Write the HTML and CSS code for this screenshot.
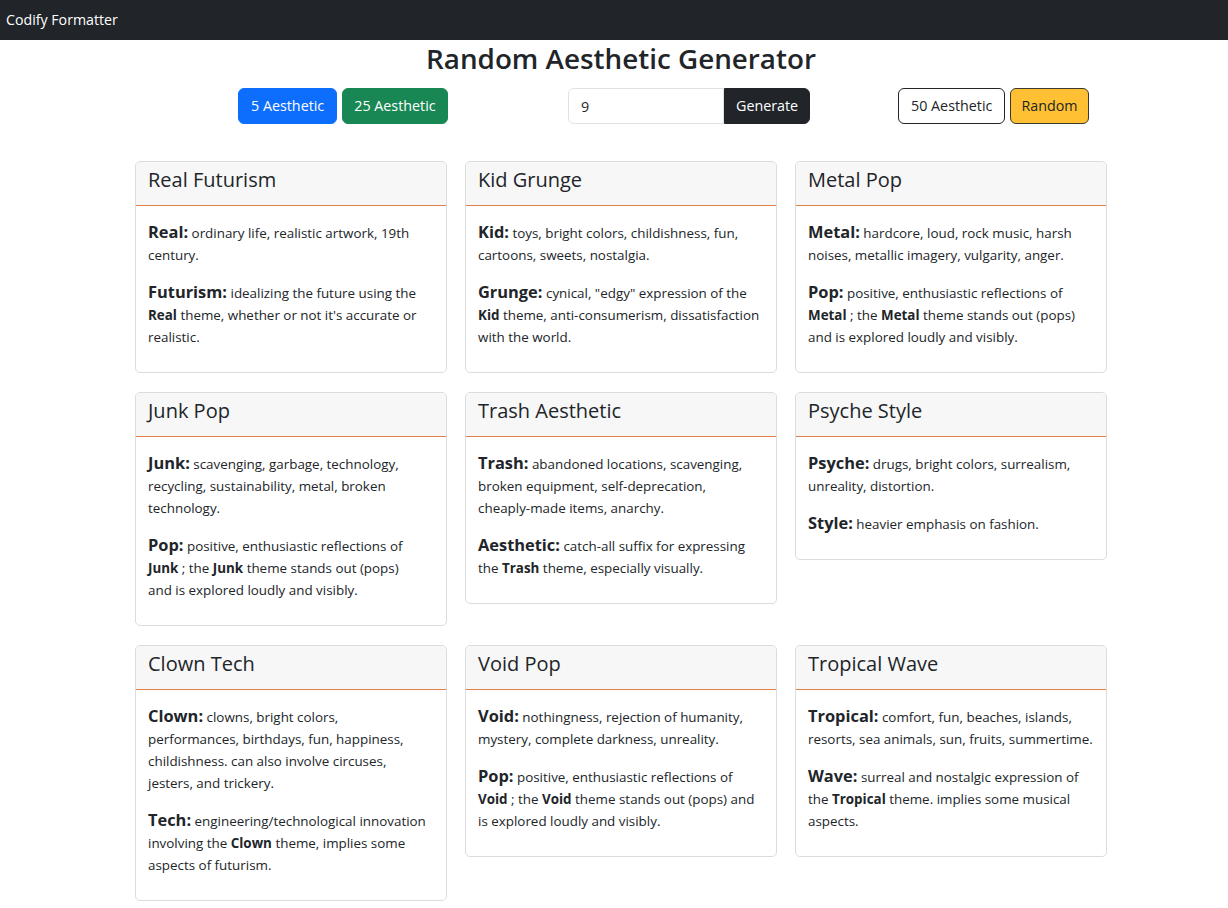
FILE: index.html
```html
<!DOCTYPE html>
<html lang="en">
<head>
<meta charset="utf-8">
<title>Random Aesthetic Generator</title>
<link rel="stylesheet" href="styles.css">
</head>
<body>
<nav class="navbar"><span class="brand">Codify Formatter</span></nav>
<main class="wrap">
  <h1 class="title">Random Aesthetic Generator</h1>
  <div class="toolbar">
    <div class="group">
      <button class="btn btn-primary">5 Aesthetic</button>
      <button class="btn btn-success">25 Aesthetic</button>
    </div>
    <div class="group input-group">
      <input class="field" type="text" value="9">
      <button class="btn btn-dark btn-attached">Generate</button>
    </div>
    <div class="group">
      <button class="btn btn-outline">50 Aesthetic</button>
      <button class="btn btn-warning">Random</button>
    </div>
  </div>
  <div class="cards">
    <div class="card">
      <div class="card-header">Real Futurism</div>
      <div class="card-body">
        <p><strong class="lbl">Real:</strong> ordinary life, realistic artwork, 19th<br>century.</p>
        <p><strong class="lbl">Futurism:</strong> idealizing the future using the<br><b>Real</b> theme, whether or not it's accurate or<br>realistic.</p>
      </div>
    </div>
    <div class="card">
      <div class="card-header">Kid Grunge</div>
      <div class="card-body">
        <p><strong class="lbl">Kid:</strong> toys, bright colors, childishness, fun,<br>cartoons, sweets, nostalgia.</p>
        <p><strong class="lbl">Grunge:</strong> cynical, "edgy" expression of the<br><b>Kid</b> theme, anti-consumerism, dissatisfaction<br>with the world.</p>
      </div>
    </div>
    <div class="card">
      <div class="card-header">Metal Pop</div>
      <div class="card-body">
        <p><strong class="lbl">Metal:</strong> hardcore, loud, rock music, harsh<br>noises, metallic imagery, vulgarity, anger.</p>
        <p><strong class="lbl">Pop:</strong> positive, enthusiastic reflections of<br><b>Metal</b> ; the <b>Metal</b> theme stands out (pops)<br>and is explored loudly and visibly.</p>
      </div>
    </div>
    <div class="card">
      <div class="card-header">Junk Pop</div>
      <div class="card-body">
        <p><strong class="lbl">Junk:</strong> scavenging, garbage, technology,<br>recycling, sustainability, metal, broken<br>technology.</p>
        <p><strong class="lbl">Pop:</strong> positive, enthusiastic reflections of<br><b>Junk</b> ; the <b>Junk</b> theme stands out (pops)<br>and is explored loudly and visibly.</p>
      </div>
    </div>
    <div class="card">
      <div class="card-header">Trash Aesthetic</div>
      <div class="card-body">
        <p><strong class="lbl">Trash:</strong> abandoned locations, scavenging,<br>broken equipment, self-deprecation,<br>cheaply-made items, anarchy.</p>
        <p><strong class="lbl">Aesthetic:</strong> catch-all suffix for expressing<br>the <b>Trash</b> theme, especially visually.</p>
      </div>
    </div>
    <div class="card">
      <div class="card-header">Psyche Style</div>
      <div class="card-body">
        <p><strong class="lbl">Psyche:</strong> drugs, bright colors, surrealism,<br>unreality, distortion.</p>
        <p><strong class="lbl">Style:</strong> heavier emphasis on fashion.</p>
      </div>
    </div>
    <div class="card">
      <div class="card-header">Clown Tech</div>
      <div class="card-body">
        <p><strong class="lbl">Clown:</strong> clowns, bright colors,<br>performances, birthdays, fun, happiness,<br>childishness. can also involve circuses,<br>jesters, and trickery.</p>
        <p><strong class="lbl">Tech:</strong> engineering/technological innovation<br>involving the <b>Clown</b> theme, implies some<br>aspects of futurism.</p>
      </div>
    </div>
    <div class="card">
      <div class="card-header">Void Pop</div>
      <div class="card-body">
        <p><strong class="lbl">Void:</strong> nothingness, rejection of humanity,<br>mystery, complete darkness, unreality.</p>
        <p><strong class="lbl">Pop:</strong> positive, enthusiastic reflections of<br><b>Void</b> ; the <b>Void</b> theme stands out (pops) and<br>is explored loudly and visibly.</p>
      </div>
    </div>
    <div class="card">
      <div class="card-header">Tropical Wave</div>
      <div class="card-body">
        <p><strong class="lbl">Tropical:</strong> comfort, fun, beaches, islands,<br>resorts, sea animals, sun, fruits, summertime.</p>
        <p><strong class="lbl">Wave:</strong> surreal and nostalgic expression of<br>the <b>Tropical</b> theme. implies some musical<br>aspects.</p>
      </div>
    </div>
  </div>
</main>
</body>
</html>
```
FILE: styles.css
```css
* { box-sizing: border-box; }
html, body { margin: 0; padding: 0; }
body {
  font-family: "Open Sans", "Noto Sans", sans-serif;
  color: #212529;
  background: #fff;
}
.navbar {
  height: 40px;
  background: #212529;
  padding: 0 6px;
  display: flex;
  align-items: center;
}
.brand {
  color: #fff;
  font-size: 14.2px;
  line-height: 40px;
}
.wrap {
  width: 972px;
  margin-left: 135px;
}
.title {
  margin: 0 0 12px;
  font-size: 27.8px;
  font-weight: 600;
  line-height: 36px;
  text-align: center;
}
.toolbar {
  display: grid;
  grid-template-columns: 330px 330px auto;
  padding-left: 103px;
  margin-bottom: 37px;
}
.group {
  display: flex;
  gap: 5px;
}
.input-group { gap: 0; }
.btn {
  height: 36px;
  padding: 0 12px;
  border: 1px solid transparent;
  border-radius: 6px;
  font-family: inherit;
  font-size: 14.3px;
  line-height: 34px;
  color: #fff;
  cursor: pointer;
}
.btn-primary { background: #0d6efd; border-color: #0d6efd; }
.btn-success { background: #198754; border-color: #198754; padding: 0 11px; }
.btn-dark { background: #212529; border-color: #212529; }
.btn-outline { background: #fff; border-color: #212529; color: #212529; }
.btn-warning { background: #ffc133; border-color: #3a3a33; color: #212529; padding: 0 10px; }
.btn-attached { border-radius: 0 6px 6px 0; padding: 0 11px; }
.field {
  width: 156px;
  height: 36px;
  padding: 0 12px;
  border: 1px solid #dee2e6;
  border-radius: 6px 0 0 6px;
  font-family: inherit;
  font-size: 14.3px;
  color: #212529;
  outline: none;
}
.cards {
  display: grid;
  grid-template-columns: repeat(3, 312px);
  column-gap: 18px;
  row-gap: 19px;
  align-items: start;
}
.card {
  border: 1px solid #dcdcdc;
  border-radius: 5px;
  overflow: hidden;
}
.card-header {
  background: #f7f7f7;
  border-bottom: 1px solid #e2804a;
  padding: 3px 12px 10px;
  font-size: 20px;
  font-weight: 400;
  line-height: 30px;
}
.card-body {
  padding: 15px 2px 10px 12px;
  font-size: 13.4px;
  line-height: 22px;
  white-space: nowrap;
}
.card-body p {
  margin: 0 0 14.5px;
}
.lbl {
  font-size: 16.4px;
  font-weight: 700;
}
.card-body b { font-weight: 700; }
```
